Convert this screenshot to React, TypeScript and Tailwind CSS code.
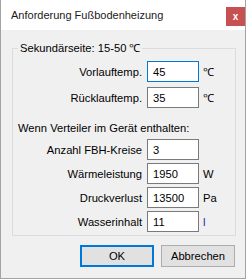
import React from "react";

const font = { fontFamily: '"Liberation Sans", Arial, sans-serif' };

type Field = { label: string; value: string; unit?: string; focused?: boolean };

const tempFields: Field[] = [
  { label: "Vorlauftemp.", value: "45", unit: "℃", focused: true },
  { label: "Rücklauftemp.", value: "35", unit: "℃" },
];

const verteilerFields: Field[] = [
  { label: "Anzahl FBH-Kreise", value: "3" },
  { label: "Wärmeleistung", value: "1950", unit: "W" },
  { label: "Druckverlust", value: "13500", unit: "Pa" },
  { label: "Wasserinhalt", value: "11", unit: "l" },
];

function FieldRow({ field }: { field: Field }) {
  return (
    <div className="flex items-center h-[21px]">
      <span className="w-[134px] pr-[5px] text-right leading-[14px]">{field.label}</span>
      <div
        className={
          field.focused
            ? "w-[52px] h-[21px] bg-white border border-[#0078d7] pl-[5px] flex items-center leading-[14px]"
            : "w-[52px] h-[21px] bg-white border border-[#7a7a7a] pl-[5px] flex items-center leading-[14px]"
        }
      >
        {field.value}
      </div>
      {field.unit ? (
        <span className={field.unit === "l" ? "pl-[4px] leading-[14px] text-[#1f2a8a]" : "pl-[4px] leading-[14px]"}>
          {field.unit}
        </span>
      ) : null}
    </div>
  );
}

export default function App() {
  return (
    <div className="w-[247px] h-[280px] bg-white text-[11.2px] text-black" style={font}>
      <div className="w-[246px] h-[279px] flex flex-col border-x border-b border-[#a3a3a3]">
        <div className="h-[30px] bg-white flex items-start justify-between">
          <span className="pl-[10px] pt-[8px] text-[11px] leading-[14px] text-[#1a1a1a]">Anforderung Fußbodenheizung</span>
          <div className="mt-[7px] w-[19px] h-[19px] bg-[#c75050] flex items-center justify-center text-white text-[10px] font-bold leading-none">
            x
          </div>
        </div>

        <div className="flex-1 bg-[#f0f0f0] flex flex-col">
          <fieldset className="mt-[11px] ml-[11px] w-[224px] border border-[#dcdcdc] px-0 pb-[3px]">
            <legend className="ml-[5px] px-[2px] leading-[14px]">Sekundärseite: 15-50 ℃</legend>
            <div className="mt-[6px] flex flex-col gap-[5px]">
              {tempFields.map((f) => (
                <FieldRow key={f.label} field={f} />
              ))}
            </div>
            <p className="mt-[13px] pl-[5px] leading-[14px]">Wenn Verteiler im Gerät enthalten:</p>
            <div className="mt-[4px] flex flex-col gap-[3px]">
              {verteilerFields.map((f) => (
                <FieldRow key={f.label} field={f} />
              ))}
            </div>
          </fieldset>

          <div className="mt-[9px] mr-[10px] flex justify-end gap-[7px]">
            <button className="w-[74px] h-[22px] bg-[#e1e1e1] border-2 border-[#0078d7] leading-[14px]">OK</button>
            <button className="w-[74px] h-[22px] bg-[#e1e1e1] border border-[#adadad] leading-[14px]">Abbrechen</button>
          </div>
        </div>
      </div>
    </div>
  );
}
